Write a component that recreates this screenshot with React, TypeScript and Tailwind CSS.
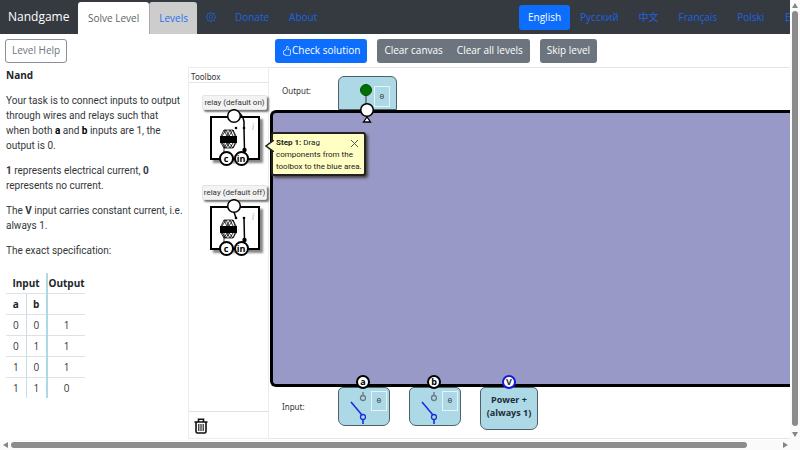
import type { ReactNode } from "react";
import { BsGear, BsHandThumbsUp } from "react-icons/bs";

const truthTable = [
  [0, 0, 1],
  [0, 1, 1],
  [1, 0, 1],
  [1, 1, 0],
];

const languages = ["Русский", "中文", "Français", "Polski", "日本語"];

function NavLink({ children }: { children: ReactNode }) {
  return (
    <a href="#" className="flex h-[25px] shrink-0 items-center rounded-[3px] px-[10px] text-[#1f63e0]">
      {children}
    </a>
  );
}

function Header() {
  return (
    <header className="flex h-[34px] shrink-0 items-center overflow-hidden bg-[#343a40]">
      <a href="#" className="w-[78px] shrink-0 pl-2 text-[12px] font-medium text-white">
        Nandgame
      </a>
      <nav className="flex items-center self-stretch" aria-label="Main">
        <a href="#" className="flex h-8 items-center self-end rounded-t-[3px] bg-white px-[10px] text-[#5c6268]">
          Solve Level
        </a>
        <a href="#" className="flex h-8 items-center self-end rounded-t-[3px] border-l border-[#aaa] bg-[#cdcdcd] px-[9px] text-[#2a6ff0]">
          Levels
        </a>
        <a href="#" aria-label="Settings" className="px-[9px] text-[#1f63e0]">
          <BsGear className="size-[10px]" />
        </a>
        <NavLink>Donate</NavLink>
        <NavLink>About</NavLink>
      </nav>
      <nav className="ml-auto flex w-[271px] shrink-0 items-center overflow-hidden" aria-label="Language">
        <a href="#" className="flex h-[25px] shrink-0 items-center rounded-[3px] bg-[#0d6efd] px-[9px] text-white">
          English
        </a>
        {languages.map((name) => (
          <NavLink key={name}>{name}</NavLink>
        ))}
      </nav>
    </header>
  );
}

function Toolbar() {
  return (
    <div className="flex h-[33px] shrink-0 items-center px-[5px]">
      <div className="w-[270px] shrink-0">
        <button className="h-6 rounded-[3px] border border-[#8a9096] px-[6px] text-[#6c757d]">Level Help</button>
      </div>
      <div className="flex gap-[10px] text-white">
        <button className="flex h-6 items-center rounded-[3px] bg-[#0d6efd] px-[7px]">
          <BsHandThumbsUp className="size-[10px]" />
          Check solution
        </button>
        <div className="flex overflow-hidden rounded-[3px] bg-[#6c757d]">
          <button className="h-6 px-[7px]">Clear canvas</button>
          <button className="h-6 px-[7px]">Clear all levels</button>
        </div>
        <button className="h-6 rounded-[3px] bg-[#6c757d] px-[7px]">Skip level</button>
      </div>
    </div>
  );
}

function HelpPanel() {
  return (
    <section className="w-[188px] shrink-0 pt-px pr-[4px] pl-[6px] font-['Roboto',sans-serif] text-[#33373b]">
      <div className="flex flex-col gap-[10px] leading-[15px]">
        <h1 className="font-['Open_Sans',sans-serif] font-bold text-[#212529]">Nand</h1>
        <p>
          Your task is to connect inputs to output through wires and relays such that
          <br />
          when both <b className="text-black">a</b> and <b className="text-black">b</b> inputs are 1, the
          <br />
          output is 0.
        </p>
        <p>
          <b>1</b> represents electrical current, <b>0</b> represents no current.
        </p>
        <p>
          The <b>V</b> input carries constant current, i.e. always 1.
        </p>
        <p>The exact specification:</p>
      </div>
      <table className="mt-[15px] table-fixed border-collapse text-center font-['Open_Sans',sans-serif] leading-5">
        <thead className="text-[#212529]">
          <tr className="border-b border-[#dee2e6]">
            <th colSpan={2} className="w-[41px] border-r-2 border-r-[#add8e6]">
              Input
            </th>
            <th className="w-[38px]">Output</th>
          </tr>
          <tr className="border-b border-[#dee2e6]">
            <th className="w-5 border-r border-r-[#c9dfe6]">a</th>
            <th className="w-[21px] border-r-2 border-r-[#add8e6]">b</th>
            <td />
          </tr>
        </thead>
        <tbody>
          {truthTable.map(([a, b, out]) => (
            <tr key={`${a}${b}`} className="border-b border-[#dee2e6] last:border-b-0">
              <td className="border-r border-r-[#c9dfe6]">{a}</td>
              <td className="border-r-2 border-r-[#add8e6]">{b}</td>
              <td>{out}</td>
            </tr>
          ))}
        </tbody>
      </table>
    </section>
  );
}

function Relay({ label, on }: { label: string; on: boolean }) {
  return (
    <div className="flex flex-col items-center gap-[6px]">
      <div className="rounded-[2px] border border-[#e4e4e4] bg-[#f3f3f3] px-px text-[8px] leading-[13px] font-['Roboto',sans-serif] whitespace-nowrap text-[#333] shadow-[2px_2px_2px_#777]">
        {label}
      </div>
      <div className="relative h-[44px] w-[50px] border-2 border-black bg-white shadow-[3px_3px_2px_#888]">
        <svg className="absolute -top-[9px] -left-[2px] h-[60px] w-[54px]" viewBox="0 0 54 60" fill="none" stroke="#000">
          <g strokeWidth="0.8">
            <path d="M11 27l3-6h9l3 6M11 34l3 5h9l3-5M14 34v12" />
            <path d="M12 27l4-6 3 6 4-6 2 6M14 21l3 6 3-6 3 6" />
            <path d="M12 34l4 5 3-5 4 5 2-5M14 39l3-5 3 5 3-5" />
          </g>
          <path d="M10 27h17v7H10z" fill="#000" stroke="none" />
          {on ? (
            <path d="M24 2.500c6 0 9 5 10 10v7l.5 22" strokeWidth="1.500" />
          ) : (
            <path d="M24 13l2 6M34 19l.5 22" strokeWidth="1.500" />
          )}
          <circle cx="24" cy="7" r="6.300" fill="#fff" strokeWidth="1.500" />
          <circle cx="26" cy="19" r="1.300" fill="#000" stroke="none" />
          <circle cx="34" cy="19" r="1.300" fill="#000" stroke="none" />
          <circle cx="34.500" cy="41" r="2.200" fill="#000" stroke="none" />
        </svg>
        <span className="absolute top-[2px] right-[3px] font-['Liberation_Serif',serif] text-[11px] leading-[12px] text-[#b9c3cb] italic">i</span>
        <span className="absolute -bottom-[8px] left-[7px] flex size-[15px] items-center justify-center rounded-full border-2 border-black bg-white text-[9px] leading-[11px] font-bold">
          c
        </span>
        <span className="absolute -bottom-[8px] left-[22px] flex size-[15px] items-center justify-center rounded-full border-2 border-black bg-white text-[9px] leading-[11px] font-bold">
          in
        </span>
      </div>
    </div>
  );
}

function Toolbox() {
  return (
    <aside className="flex w-[81px] shrink-0 flex-col border border-[#ececec]">
      <h2 className="h-[15px] border-b border-[#e4e4e4] pl-[2px] font-['Noto_Sans',sans-serif] text-[8px] leading-[17px] text-[#333]">Toolbox</h2>
      <div className="flex flex-1 flex-col gap-[25px] pt-[12px] pl-[12px]">
        <Relay label="relay (default on)" on />
        <Relay label="relay (default off)" on={false} />
      </div>
      <div className="h-[27px] border-t border-[#e0e0e0] px-[5px] pt-[6px]">
        <button aria-label="Trash" className="block">
          <svg className="h-[16px] w-[14px]" viewBox="0 0 14 16" fill="none" stroke="#111" strokeWidth="1.6">
            <path d="M.5 4h13M4.500 3.500V1.200h5v2.300M2 4v9.500q0 1.500 1.500 1.500h7q1.500 0 1.500-1.500V4" />
            <path d="M4.800 6v7M7 6v7M9.200 6v7" strokeWidth="1.1" />
          </svg>
        </button>
      </div>
    </aside>
  );
}

function ValueBox() {
  return (
    <span className="flex w-[16px] items-center justify-center border border-[#e6f4f8] font-['Liberation_Mono',monospace] text-[8px] text-[#333]">
      0
    </span>
  );
}

function InputNode({ name }: { name: string }) {
  return (
    <div className="relative h-[39px] w-[52px] rounded-b-[7px] rounded-t-[5px] border border-[#4f6068] bg-[#add8e6]">
      <span className="absolute -top-[13px] left-[17px] flex size-[14px] items-center justify-center rounded-full border-2 border-black bg-white text-[9px] leading-[10px] font-bold">
        {name}
      </span>
      <div className="flex h-full justify-end gap-[5px] pt-[3px] pr-[2px]">
        <svg className="h-[33px] w-[18px]" viewBox="0 0 18 33" fill="none" strokeWidth="1.3">
          <path d="M15 1v4" stroke="#68787e" />
          <circle cx="15" cy="7" r="2.500" stroke="#68787e" />
          <path d="M3 11l11 13M15 29v4" stroke="#1730dc" strokeWidth="1.600" />
          <circle cx="15" cy="26" r="2.500" stroke="#1730dc" />
        </svg>
        <div className="flex h-[20px]">
          <ValueBox />
        </div>
      </div>
    </div>
  );
}

function Tooltip() {
  return (
    <div className="absolute top-[19px] -left-[2px] w-[95px] rounded-[3px] border-2 border-[#222] bg-[#ffffc4] pt-[3px] pb-px pl-[3px] font-['Roboto',sans-serif] text-[8px] leading-[12px] text-[#222] shadow-[2px_2px_3px_#444]">
      <svg className="absolute top-[6px] -left-[8px] h-[12px] w-[9px]" viewBox="0 0 9 12">
        <path d="M9 0L1 6l8 6" fill="#ffffc4" stroke="#222" strokeWidth="1.500" />
      </svg>
      <button aria-label="Close" className="absolute top-[5px] right-[5px]">
        <svg className="size-[9px]" viewBox="0 0 9 9" stroke="#555">
          <path d="M1 1l7 7M8 1L1 8" />
        </svg>
      </button>
      <p className="whitespace-nowrap">
        <b>Step 1:</b> Drag
        <br />
        components from the
        <br />
        toolbox to the blue area.
      </p>
    </div>
  );
}

function Canvas() {
  return (
    <main className="flex min-w-0 flex-1 flex-col border-t border-b border-[#e4e4e4]">
      <div className="flex h-[42px] shrink-0 items-end pl-[13px]">
        <span className="w-[56px] self-center pt-[3px] font-['Noto_Sans',sans-serif] text-[8px] text-[#333]">Output:</span>
        <div className="relative h-[34px] w-[59px] rounded-t-[6px] border border-[#4f6068] bg-[#add8e6]">
          <svg className="absolute top-[5px] left-[20px] z-10 h-[42px] w-[16px]" viewBox="0 0 16 42" stroke="#000">
            <path d="M7 12v10" stroke="#557078" strokeWidth="1.500" />
            <circle cx="7" cy="8" r="5.500" fill="#007000" stroke="#005000" />
            <path d="M8 35l-3.500 5h7z" fill="#fff" strokeWidth="1.300" />
            <circle cx="8" cy="28" r="6.300" fill="#fff" strokeWidth="1.600" />
          </svg>
          <div className="flex h-[30px] justify-end pt-[9px] pr-[6px]">
            <ValueBox />
          </div>
        </div>
      </div>
      <div className="relative ml-px flex-1 rounded-l-[6px] border-y-[3px] border-l-[3px] border-black bg-[#9999c8]">
        <Tooltip />
      </div>
      <div className="flex h-[51px] shrink-0 items-start pl-[13px]">
        <span className="w-[56px] pt-[14px] font-['Noto_Sans',sans-serif] text-[8px] text-[#333]">Input:</span>
        <div className="flex gap-[19px]">
          <InputNode name="a" />
          <InputNode name="b" />
          <div className="relative h-[43px] w-[58px] rounded-b-[7px] rounded-t-[5px] border border-[#4f6068] bg-[#add8e6] pt-[5px] text-center text-[9px] leading-[13px] font-bold text-[#1c2d38]">
            <span className="absolute -top-[13px] left-[21px] flex size-[14px] items-center justify-center rounded-full border-2 border-[#1818d8] bg-white text-[9px] leading-[10px]">
              V
            </span>
            Power +
            <br />
            (always 1)
          </div>
        </div>
      </div>
    </main>
  );
}

function VerticalScrollbar() {
  return (
    <div className="flex w-[10px] shrink-0 flex-col items-center bg-[#fafafa] py-[3px]">
      <svg className="h-[5px] w-[6px]" viewBox="0 0 6 5">
        <path d="M3 0l3 5H0z" fill="#858585" />
      </svg>
      <div className="mt-[3px] mb-[6px] w-[6px] flex-1 rounded-full bg-[#8b8b8b]" />
      <svg className="h-[5px] w-[6px]" viewBox="0 0 6 5">
        <path d="M3 5l3-5H0z" fill="#858585" />
      </svg>
    </div>
  );
}

function HorizontalScrollbar() {
  return (
    <div className="flex h-[10px] shrink-0 items-center bg-[#fafafa] pr-[12px] pl-[3px]">
      <svg className="h-[6px] w-[5px]" viewBox="0 0 5 6">
        <path d="M0 3l5-3v6z" fill="#858585" />
      </svg>
      <div className="mr-[36px] ml-[3px] h-[6px] flex-1 rounded-full bg-[#8b8b8b]" />
      <svg className="h-[6px] w-[5px]" viewBox="0 0 5 6">
        <path d="M5 3L0 0v6z" fill="#858585" />
      </svg>
    </div>
  );
}

export default function App() {
  return (
    <div className="flex h-screen flex-col overflow-hidden bg-white font-['Open_Sans','Noto_Sans_CJK_SC',sans-serif] text-[10px]">
      <div className="flex min-h-0 flex-1">
        <div className="flex min-w-0 flex-1 flex-col">
          <Header />
          <Toolbar />
          <div className="mb-px flex min-h-0 flex-1">
            <HelpPanel />
            <Toolbox />
            <Canvas />
          </div>
        </div>
        <VerticalScrollbar />
      </div>
      <HorizontalScrollbar />
    </div>
  );
}
